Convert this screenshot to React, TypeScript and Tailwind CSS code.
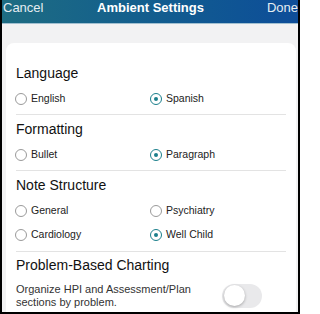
const font = { fontFamily: '"Liberation Sans", Arial, sans-serif' };

function Radio({ label, checked }: { label: string; checked?: boolean }) {
  return (
    <div className="flex items-center">
      {checked ? (
        <span className="flex-none w-[12px] h-[12px] rounded-full border-[1.5px] border-[#1b7f8c] flex items-center justify-center">
          <span className="w-[4.5px] h-[4.5px] rounded-full bg-[#1b7f8c]"></span>
        </span>
      ) : (
        <span className="flex-none w-[12px] h-[12px] rounded-full border border-[#9a9a9a]"></span>
      )}
      <span className="ml-[4px] text-[10.5px] text-[#222]">{label}</span>
    </div>
  );
}

function RadioRow({ items, h = "h-[24px]" }: { items: { label: string; checked?: boolean }[]; h?: string }) {
  return (
    <div className={`grid grid-cols-[135px_1fr] items-center -ml-px ${h}`}>
      {items.map((it) => (
        <Radio key={it.label} label={it.label} checked={it.checked} />
      ))}
    </div>
  );
}

function Heading({ children, h = "h-[28px]" }: { children: string; h?: string }) {
  return <div className={`${h} flex items-center text-[14px] text-[#111]`}>{children}</div>;
}

export default function App() {
  return (
    <div
      style={font}
      className="w-[300px] h-[314px] overflow-hidden border-l-2 border-r-2 border-b-2 border-black bg-[#f2f2f3] flex flex-col"
    >
      <div className="h-[23px] flex-none bg-gradient-to-r from-[#1e6c82] to-[#0e4d99] grid grid-cols-[1fr_auto_1fr] items-start text-[13px] leading-[15px] text-white pl-px">
        <span className="text-[#e6edf2]">Cancel</span>
        <span className="font-bold">Ambient Settings</span>
        <span className="text-right text-[#e6edf2]">Done</span>
      </div>
      <div className="h-px flex-none bg-[#a2c0d0]"></div>
      <div className="flex-1 pt-[19px] pl-[4px] pr-[2px]">
        <div className="h-full bg-white rounded-t-[8px] pt-[16px] pl-[10px] pr-[10px]">
          <Heading>Language</Heading>
          <RadioRow items={[{ label: "English" }, { label: "Spanish", checked: true }]} />
          <div className="h-[3px]"></div>
          <div className="h-px bg-[#e3e3e3]"></div>

          <Heading>Formatting</Heading>
          <RadioRow items={[{ label: "Bullet" }, { label: "Paragraph", checked: true }]} />
          <div className="h-[3px]"></div>
          <div className="h-px bg-[#e3e3e3]"></div>

          <Heading>Note Structure</Heading>
          <RadioRow items={[{ label: "General" }, { label: "Psychiatry" }]} />
          <RadioRow items={[{ label: "Cardiology" }, { label: "Well Child", checked: true }]} />
          <div className="h-[4px]"></div>
          <div className="h-px bg-[#e3e3e3]"></div>

          <Heading h="h-[26px]">Problem-Based Charting</Heading>
          <div className="flex items-center mt-[5px]">
            <div className="w-[196px] flex-none text-[11px] leading-[12.5px] text-[#333]">
              Organize HPI and Assessment/Plan
              <br />
              sections by problem.
            </div>
            <div className="ml-[10px] w-[40px] h-[24px] rounded-full bg-[#e9e9eb] p-[1.5px] flex items-center">
              <span className="w-[21px] h-[21px] rounded-full bg-white shadow-[0_1px_3px_rgba(0,0,0,0.3)]"></span>
            </div>
          </div>
        </div>
      </div>
    </div>
  );
}
